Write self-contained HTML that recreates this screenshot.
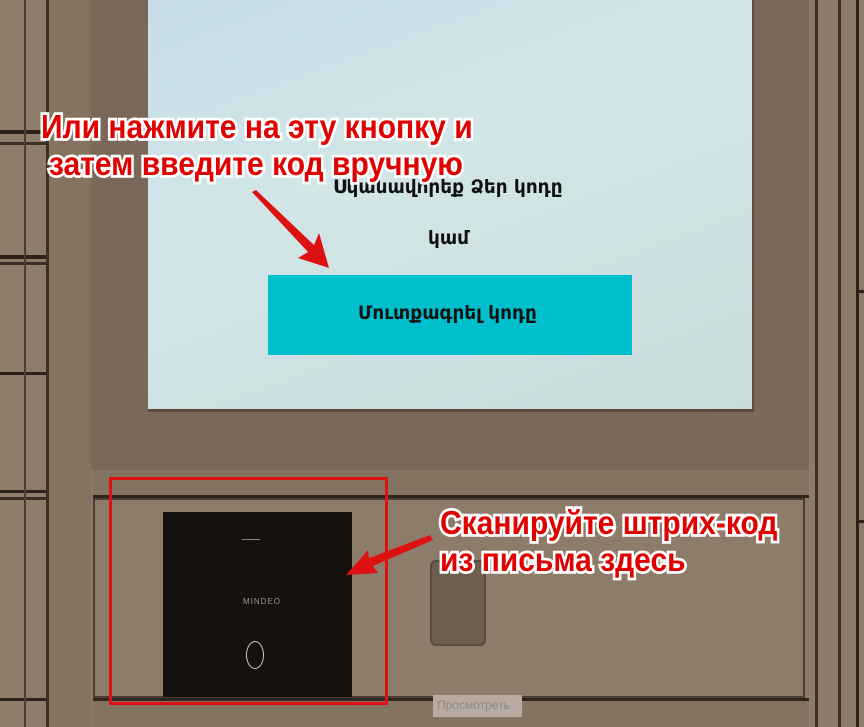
<!DOCTYPE html>
<html><head><meta charset="utf-8"><style>
body{margin:0;width:864px;height:727px;overflow:hidden;background:#8c7a68;position:relative;font-family:"Liberation Sans",sans-serif}
div{position:absolute;box-sizing:border-box}
.ann{color:#e00000;font-weight:bold;font-size:30px;letter-spacing:0;-webkit-text-stroke:5px #fff;paint-order:stroke fill;white-space:nowrap;line-height:37px;transform-origin:0 50%;transform:scaleY(1.1)}
.arm{color:#111;font-family:"DejaVu Sans","Liberation Sans",sans-serif;font-size:19px;font-weight:bold;white-space:nowrap;transform-origin:0 50%;transform:scaleX(0.97)}
</style></head><body>
<div style="left:0;top:0;width:48px;height:727px;background:#8f7d6b"></div>
<div style="left:0;top:130px;width:48px;height:4px;background:#2a221b"></div>
<div style="left:0;top:142px;width:48px;height:3px;background:#3a3028"></div>
<div style="left:0;top:255px;width:48px;height:4px;background:#2a221b"></div>
<div style="left:0;top:262px;width:48px;height:3px;background:#3a3028"></div>
<div style="left:0;top:372px;width:48px;height:3px;background:#2a221b"></div>
<div style="left:0;top:490px;width:48px;height:3px;background:#2a221b"></div>
<div style="left:0;top:497px;width:48px;height:3px;background:#3a3028"></div>
<div style="left:0;top:698px;width:48px;height:3px;background:#2a221b"></div>
<div style="left:24px;top:0;width:2px;height:727px;background:#4a3e34"></div>
<div style="left:46px;top:0;width:3px;height:727px;background:#3a3028"></div>
<div style="left:49px;top:0;width:42px;height:727px;background:#85725f"></div>
<div style="left:91px;top:0;width:718px;height:470px;background:#7a695a"></div>
<div style="left:148px;top:0;width:606px;height:412px;background:linear-gradient(160deg,#c6dce6,#d2e6e8 40%,#c9dcdc);border-right:2px solid #5a4c40;border-bottom:3px solid #5a4c40"></div>
<div class="arm" style="left:333px;top:176px">Սկանավորեք Ձեր կոդը</div>
<div class="arm" style="left:428px;top:227px">կամ</div>
<div style="left:268px;top:275px;width:364px;height:80px;background:#00bfcc"></div>
<div class="arm" style="left:358px;top:302px">Մուտքագրել կոդը</div>
<div style="left:809px;top:0;width:55px;height:727px;background:#8d7b69"></div>
<div style="left:815px;top:0;width:3px;height:727px;background:#3a3028"></div>
<div style="left:838px;top:0;width:3px;height:727px;background:#3a3028"></div>
<div style="left:856px;top:0;width:3px;height:727px;background:#2a221b"></div>
<div style="left:856px;top:290px;width:8px;height:3px;background:#2a221b"></div>
<div style="left:856px;top:520px;width:8px;height:3px;background:#2a221b"></div>
<div style="left:93px;top:470px;width:716px;height:28px;background:#857362;border-bottom:3px solid #2e251e"></div>
<div style="left:93px;top:498px;width:712px;height:200px;background:#8e7c6a;border:2px solid #4a3e34"></div>
<div style="left:93px;top:698px;width:716px;height:29px;background:#857362;border-top:3px solid #2e251e"></div>
<div style="left:163px;top:512px;width:189px;height:185px;background:#15110e"></div>
<div style="left:242px;top:539px;width:18px;height:1px;background:#888"></div>
<div style="left:243px;top:597px;color:#999;font-size:8px;letter-spacing:1px">MINDEO</div>
<div style="left:246px;top:641px;width:18px;height:28px;border:1px solid #ccc;border-radius:50%"></div>
<div style="left:430px;top:560px;width:56px;height:86px;background:#6e5e50;border:2px solid #5a4c40;border-radius:6px"></div>
<div style="left:109px;top:477px;width:279px;height:228px;border:3px solid #dd1111"></div>
<div style="left:433px;top:695px;width:89px;height:22px;background:#b7aaa0;color:#8e8682;font-size:12px;padding:3px 4px">Просмотреть</div>
<div class="ann" style="left:41px;top:109px">Или нажмите на эту кнопку и</div>
<div class="ann" style="left:49px;top:146px">затем введите код вручную</div>
<div class="ann" style="left:440px;top:505px">Сканируйте штрих-код</div>
<div class="ann" style="left:440px;top:542px">из письма здесь</div>
<svg style="position:absolute;left:0;top:0" width="864" height="727">
<polygon points="252,192 256,190 314,245 319,233 329,268 298,258 308,252" fill="#dd1111"/>
<polygon points="430,535 433,540 373,566 378,573 346,575 368,550 369,558" fill="#dd1111"/>
</svg>
</body></html>
